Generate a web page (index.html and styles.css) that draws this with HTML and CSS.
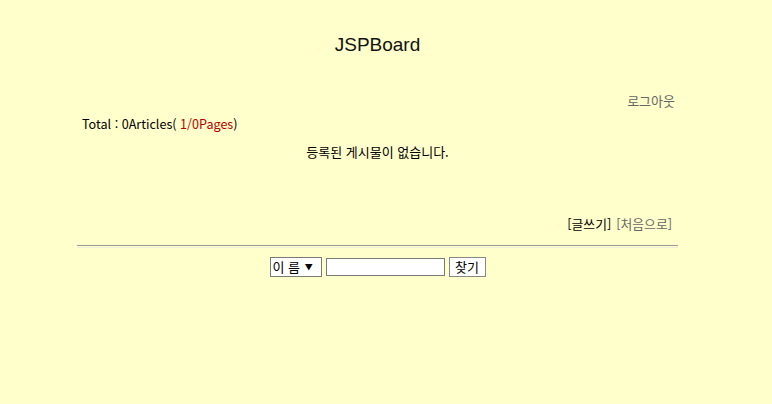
FILE: index.html
```html
<!DOCTYPE html>
<html lang="ko">
<head>
<meta charset="utf-8">
<title>JSPBoard</title>
<link rel="stylesheet" href="styles.css">
</head>
<body>
<div class="page">
  <h1 class="title">JSPBoard</h1>
  <div class="logout-row"><a class="gray-link" href="#">로그아웃</a></div>
  <div class="total">Total : 0Articles( <span class="red">1/0Pages</span>)</div>
  <div class="empty">등록된 게시물이 없습니다.</div>
  <div class="links"><a class="black-link" href="#">[글쓰기]</a><a class="gray-link" href="#">[처음으로]</a></div>
  <div class="rule"></div>
  <form class="search">
    <div class="select">이 름 <span class="arrow">▼</span></div>
    <input class="field" type="text">
    <button class="btn" type="button">찾기</button>
  </form>
</div>
</body>
</html>
```

FILE: styles.css
```css
html, body {
  margin: 0;
  padding: 0;
  background: #ffffcc;
}
body {
  font-family: "Noto Sans CJK KR", "Liberation Sans", sans-serif;
  font-size: 13px;
  color: #000;
}
.page {
  width: 601px;
  margin-left: 77px;
  display: flex;
  flex-direction: column;
}
.title {
  margin: 34px 0 0;
  height: 22px;
  line-height: 22px;
  font-family: "Liberation Sans", sans-serif;
  font-weight: normal;
  font-size: 19px;
  text-align: center;
  color: #111;
}
.logout-row {
  margin-top: 37px;
  height: 16px;
  line-height: 16px;
  text-align: right;
  padding-right: 3px;
}
.gray-link {
  color: #666;
  text-decoration: none;
}
.black-link {
  color: #000;
  text-decoration: none;
}
.total {
  margin-top: 7px;
  padding-left: 5px;
  height: 16px;
  line-height: 16px;
  font-size: 12.6px;
}
.red {
  color: #b80000;
}
.empty {
  margin-top: 12px;
  height: 16px;
  line-height: 16px;
  text-align: center;
}
.links {
  margin-top: 56px;
  height: 16px;
  line-height: 16px;
  display: flex;
  justify-content: flex-end;
  gap: 5px;
  padding-right: 6px;
  font-size: 12.8px;
}
.rule {
  margin-top: 13px;
  height: 1px;
  border-top: 1px solid #999;
  border-bottom: 1px solid #eeeedd;
}
.search {
  margin: 9px 0 0;
  display: flex;
  justify-content: center;
  align-items: center;
}
.select {
  width: 48px;
  height: 18px;
  line-height: 18px;
  border: 1px solid #7a7a7a;
  background: #fff;
  padding-left: 2px;
  box-sizing: content-box;
  font-size: 13px;
  white-space: nowrap;
}
.arrow {
  font-size: 8px;
  vertical-align: 2px;
  margin-left: 1px;
}
.field {
  width: 113px;
  height: 16px;
  margin: 0 0 0 4px;
  padding: 0 2px;
  border: 1px solid #7a7a7a;
  background: #fff;
  box-sizing: content-box;
}
.btn {
  width: 37px;
  height: 20px;
  margin: 0 0 0 4px;
  padding: 0;
  border: 1px solid #888;
  background: #fff;
  font-family: "Noto Sans CJK KR", sans-serif;
  font-size: 13px;
  line-height: 16px;
  color: #000;
}
```
